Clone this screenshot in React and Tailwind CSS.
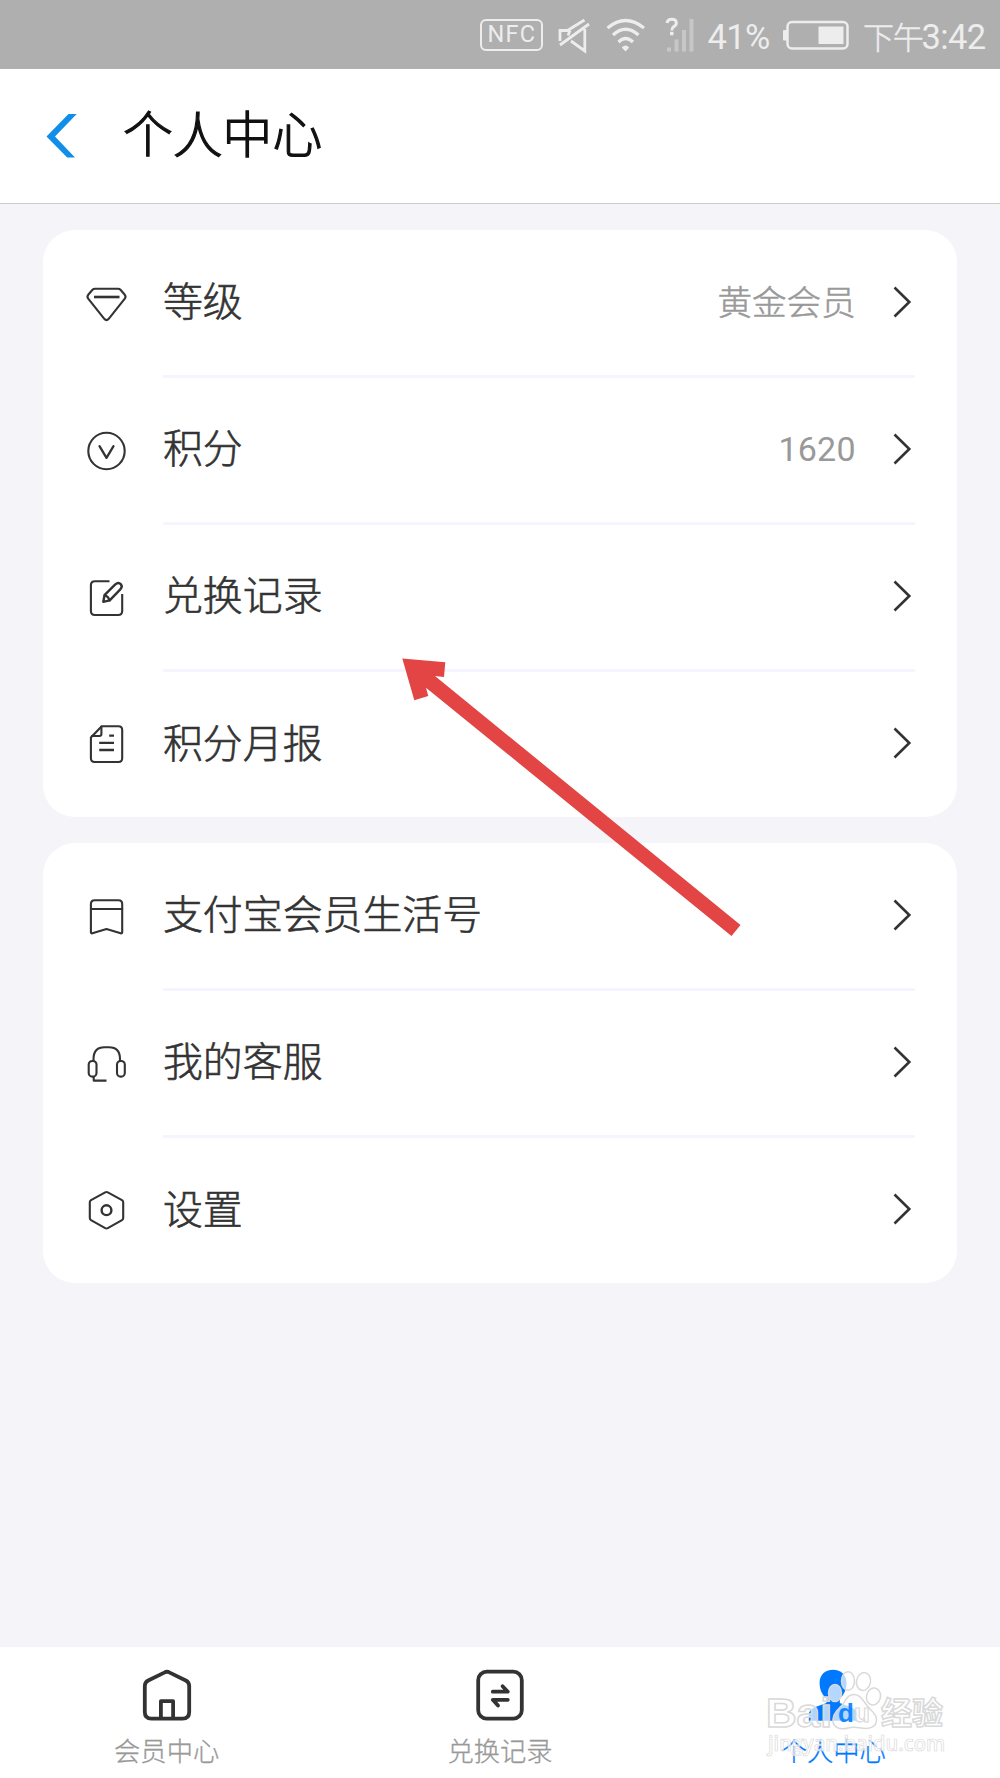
import React from "react";

const DiamondIcon = () => (
  <>
    <path d="M12.5 8.7H35.5Q37 8.7 38 9.8L42.3 14.8Q43.8 16.7 42.3 18.7L26.2 38.8Q24 41.4 21.8 38.8L5.7 18.7Q4.2 16.7 5.7 14.8L10 9.8Q11 8.7 12.5 8.7Z" />
    <path d="M11.5 17H37" strokeWidth="2.6" strokeLinecap="butt" />
  </>
);

const PointsIcon = () => (
  <>
    <circle cx="24" cy="24" r="18.2" />
    <path d="M17 19.2L24 30.8L31 19.2" strokeWidth="2.3" />
  </>
);

const EditIcon = () => (
  <>
    <path
      d="M27 7.3H12.4Q8.4 7.3 8.4 11.3V37Q8.4 41 12.4 41H35.7Q39.7 41 39.7 37V20"
      strokeLinecap="butt"
    />
    <path d="M20.8 27.8L22 21.2L32.8 10.4C37 6.8 41.4 11.6 37.8 15.4L27.2 26.4Z" strokeWidth="2.4" />
    <path d="M22.4 21.2Q26.2 22.6 27 26.4" strokeWidth="2.2" />
  </>
);

const ReportIcon = () => (
  <>
    <path d="M19.2 5.3H36Q39.7 5.3 39.7 9V37.3Q39.7 41 36 41H12.1Q8.4 41 8.4 37.3V16.6Z" />
    <path d="M18.9 5.8V13Q18.9 15 16.9 15H9.4" />
    <path d="M26.7 14.7H31.5M16.7 21.9H31.5M16.7 29H31.5" strokeWidth="2.3" strokeLinecap="butt" />
  </>
);

const BookmarkIcon = () => (
  <>
    <path d="M12.2 7.3H36Q39.7 7.3 39.7 11V39.2Q39.7 40.7 38.2 40.2L24 36L9.9 40.2Q8.4 40.7 8.4 39.2V11Q8.4 7.3 12.2 7.3Z" />
    <path d="M8.4 16H39.7" />
  </>
);

const HeadsetIcon = () => (
  <>
    <path d="M11 21V19.3Q11 7.3 22 7.3H26.6Q37.5 7.3 37.5 19.3V21" />
    <rect x="6.2" y="21" width="7.8" height="15.6" rx="3.6" />
    <rect x="34.5" y="21" width="7.8" height="15.6" rx="3.6" />
    <path d="M11.2 36.6V40.6H24" strokeLinecap="butt" />
  </>
);

const SettingsIcon = () => (
  <>
    <path d="M22.7 5.3Q24 4.6 25.3 5.3L39.5 13.2Q40.7 13.9 40.7 15.3V31.1Q40.7 32.5 39.5 33.2L25.3 41.1Q24 41.8 22.7 41.1L8.5 33.2Q7.3 32.5 7.3 31.1V15.3Q7.3 13.9 8.5 13.2Z" />
    <circle cx="24" cy="23.2" r="4.9" strokeWidth="2.4" />
  </>
);

const groups = [
  [
    { label: "等级", icon: DiamondIcon, value: "黄金会员" },
    { label: "积分", icon: PointsIcon, value: "1620", numeric: true },
    { label: "兑换记录", icon: EditIcon },
    { label: "积分月报", icon: ReportIcon },
  ],
  [
    { label: "支付宝会员生活号", icon: BookmarkIcon },
    { label: "我的客服", icon: HeadsetIcon },
    { label: "设置", icon: SettingsIcon },
  ],
];

const StatusBar = () => (
  <div className="h-[69.3px] bg-[#afafaf] flex items-start text-[#ededed] pl-[480px]">
    <div className="mt-[19px] w-[63px] h-[32px] shrink-0 rounded-[6px] border-2 border-[#ededed] flex items-center justify-center font-['Roboto'] text-[23.5px] leading-none tracking-[1.3px] pl-[1px]">
      NFC
    </div>
    <svg className="ml-[14px] mt-[18px] shrink-0" width="34" height="36" fill="none" stroke="#ededed" strokeWidth="2.8">
      <path d="M3 23V12.5H10.5L27.5 2M3 27L32 6M11 17.5L13 12.5M14 23L27.8 33V11" />
    </svg>
    <svg className="ml-[15px] mt-[17px] shrink-0" width="40" height="36" fill="none" stroke="#ededed" strokeWidth="3.2">
      <path d="M1.5 11Q19.5 -4 38 11M7 18Q19.5 6.5 32.5 18M12.5 25Q19.5 18 27 25" />
      <path d="M15.8 30.5Q19.5 26.5 23.2 30.5L19.5 34.5Z" fill="#ededed" stroke="none" />
    </svg>
    <svg className="ml-[18.5px] mt-[17px] shrink-0" width="30" height="36">
      <g fill="#c7c7c7">
        <rect x="2" y="30.5" width="4" height="4" />
        <rect x="9.5" y="22.5" width="4" height="12" />
        <rect x="17" y="13" width="4" height="21.5" />
        <rect x="24.5" y="2" width="4" height="32.5" />
      </g>
      <path d="M2 6Q2.6 2.2 6.8 2.2Q11.3 2.2 11.3 6Q11.3 8.2 8.8 9.6Q6.8 11 6.8 13.4" fill="none" stroke="#ededed" strokeWidth="3" />
      <rect x="5" y="14.8" width="3.5" height="3.5" fill="#ededed" />
    </svg>
    <span className="ml-[13px] mt-[17px] w-[62px] shrink-0 font-['Roboto'] text-[34.5px] leading-[40px] whitespace-nowrap tracking-[-0.6px]">
      41%
    </span>
    <svg className="ml-[13.5px] mt-[20px] shrink-0" width="67" height="31">
      <rect x="4.5" y="2" width="60" height="26.5" rx="4.5" fill="none" stroke="#ededed" strokeWidth="2.5" />
      <rect x="0" y="10" width="4.5" height="10.5" rx="1" fill="#ededed" />
      <rect x="35.5" y="6.5" width="25" height="17.5" fill="#ededed" />
    </svg>
    <div className="ml-[13px] mt-[17px] flex shrink-0 whitespace-nowrap leading-[40px]">
      <span className="font-['Noto_Sans_CJK_SC'] font-light text-[31px] tracking-[-1.2px] w-[58.5px] -mt-[1.5px] [-webkit-text-stroke:0.5px]">下午</span>
      <span className="font-['Roboto'] text-[34.5px] tracking-[-0.6px]">3:42</span>
    </div>
  </div>
);

const Row = ({ item, last }) => {
  const Icon = item.icon;
  return (
    <div className={`flex pl-[40px] pr-[42.6px] ${last ? "h-[144.9px]" : "h-[147.2px]"}`}>
      <div className="w-[80.3px] h-[144.3px] pt-[2px] flex items-center shrink-0">
        <svg
          width="48"
          height="48"
          viewBox="0.5 0 48 48"
          fill="none"
          stroke="#333333"
          strokeWidth="2.1"
          strokeLinecap="round"
          strokeLinejoin="round"
        >
          <Icon />
        </svg>
      </div>
      <div className={`flex-1 flex items-center ${last ? "" : "border-b-[3px] border-[#f5f5ff]"}`}>
        <span className="flex-1 font-light text-[39.9px] leading-[60px] text-[#333333] -mt-[7px] [-webkit-text-stroke:0.6px]">
          {item.label}
        </span>
        {item.value && (
          <span
            className={`text-[#999999] mr-[37px] ${
              item.numeric
                ? "font-['Roboto'] text-[34px] leading-[50px] tracking-[0.2px] -mt-[2px]"
                : "font-light text-[34.6px] leading-[50px] -mt-[6px] [-webkit-text-stroke:0.5px]"
            }`}
          >
            {item.value}
          </span>
        )}
        <svg className="mr-[2px] -mt-[2px] shrink-0" width="20" height="34" fill="none" stroke="#333333" strokeWidth="2.6">
          <path d="M1.5 2.5L16.3 17L1.5 31.5" />
        </svg>
      </div>
    </div>
  );
};

const Tab = ({ label, active, children }) => (
  <div className="flex-1 flex flex-col items-center pt-[22px]">
    <svg width="50" height="52" viewBox="0 0 50 52" fill="none" stroke="#333333" strokeWidth="3.8" strokeLinecap="round" strokeLinejoin="round">
      {children}
    </svg>
    <span
      className={`mt-[9px] font-light text-[26.3px] leading-[40px] [-webkit-text-stroke:0.3px] ${
        active ? "text-[#0079ff]" : "text-[#999999]"
      }`}
    >
      {label}
    </span>
  </div>
);

const Watermark = () => (
  <svg
    className="absolute left-[760px] top-[1664px] pointer-events-none overflow-visible"
    width="200"
    height="100"
    fill="#ffffff"
    fillOpacity="0.7"
    stroke="#d9d9d9"
    strokeWidth="1.5"
  >
    <text x="6" y="62.5" textLength="66" lengthAdjust="spacingAndGlyphs" fontSize="41" fontWeight="700" fontFamily="Liberation Sans, sans-serif">
      Bai
    </text>
    <ellipse cx="75" cy="29" rx="6.5" ry="8.5" />
    <ellipse cx="88" cy="17" rx="6.5" ry="9.3" />
    <ellipse cx="103.5" cy="17.5" rx="7" ry="9" transform="rotate(12 103.5 17.5)" />
    <ellipse cx="113.5" cy="32.5" rx="7" ry="8.5" transform="rotate(15 113.5 32.5)" />
    <path d="M94 30.5C102 30.5 104 40 111 46C119 53 119 64 106 64.5C99 64.5 96 62 88 64C77 67 71 61 73.5 53C75 46 82 43 85 37C87 33 89 30.5 94 30.5Z" />
    <text x="78" y="57.5" fontSize="26" fontWeight="700" fontFamily="Liberation Sans, sans-serif">
      <tspan fill="#0079ff" fillOpacity="0.9" stroke="none">d</tspan>
      <tspan strokeWidth="1.1">u</tspan>
    </text>
    <text x="121" y="60" textLength="62" fontSize="31" fontWeight="700" fontFamily="Noto Sans CJK SC, sans-serif">
      经验
    </text>
    <text x="8" y="86.5" textLength="177" lengthAdjust="spacingAndGlyphs" fontSize="22" fontWeight="600" strokeWidth="0.7" fontFamily="Open Sans, sans-serif">
      jingyan.baidu.com
    </text>
  </svg>
);

export default function App() {
  return (
    <div className="relative w-[1000px] h-[1778px] overflow-hidden bg-[#f4f4f9] flex flex-col font-['Noto_Sans_CJK_SC',sans-serif]">
      <StatusBar />
      <header className="h-[134.7px] bg-white border-b border-[#cccccc] flex items-center pl-[46px]">
        <svg className="shrink-0" width="32" height="44" fill="#108ee9">
          <path d="M22.5 0H30.7L9 22.5L29 43.5H21.2L0.5 22.5Z" />
        </svg>
        <h1 className="ml-[45px] -mt-[11px] font-light text-[49.8px] leading-[74px] text-[#111111] [-webkit-text-stroke:1.2px]">
          个人中心
        </h1>
      </header>

      <main className="flex-1 px-[42.7px] pt-[26.5px] flex flex-col gap-[26.5px]">
        {groups.map((group, gIndex) => (
          <section key={gIndex} className="bg-white rounded-[32px]">
            {group.map((item, index) => (
              <Row key={item.label} item={item} last={index === group.length - 1} />
            ))}
          </section>
        ))}
      </main>

      <nav className="h-[132.5px] bg-white border-t border-[#f4f4f4] flex">
        <Tab label="会员中心">
          <path d="M22.8 3.4Q25 2 27.2 3.4L43.8 11.5Q47.2 13.3 47.2 17V43Q47.2 49.7 40.5 49.7H9.5Q2.8 49.7 2.8 43V17Q2.8 13.3 6.2 11.5Z" />
          <path d="M18.9 49V32.2H31.1V49" />
        </Tab>
        <Tab label="兑换记录">
          <rect x="3.2" y="2.7" width="43.6" height="47" rx="8.5" />
          <path d="M17.8 22.7H32.8L27.6 17.2M32.8 30.8H17.8L23 36.5" />
        </Tab>
        <Tab label="个人中心" active>
          <path
            d="M25 0.8C33 0.8 38.5 6 38.5 14C38.5 21 35.5 26.5 31.8 29.5V34L44 38.5Q49.3 41 49.3 46V51.7H0.8V46Q0.8 41 6 38.5L18.4 34V29.5C14.5 26.5 11.6 21 11.6 14C11.6 6 17 0.8 25 0.8Z"
            fill="#0079ff"
            stroke="none"
          />
        </Tab>
      </nav>

      {/* Pointer to the exchange record row */}
      <svg className="absolute left-[402px] top-[658px] pointer-events-none" width="342" height="280" fill="#e34444">
        <path d="M0.3 0.5L43.3 4.3L42 19L33 18L338.5 267L329.5 278L24 29.7L26.3 38L12.3 42.2Z" />
      </svg>
      <Watermark />
    </div>
  );
}
